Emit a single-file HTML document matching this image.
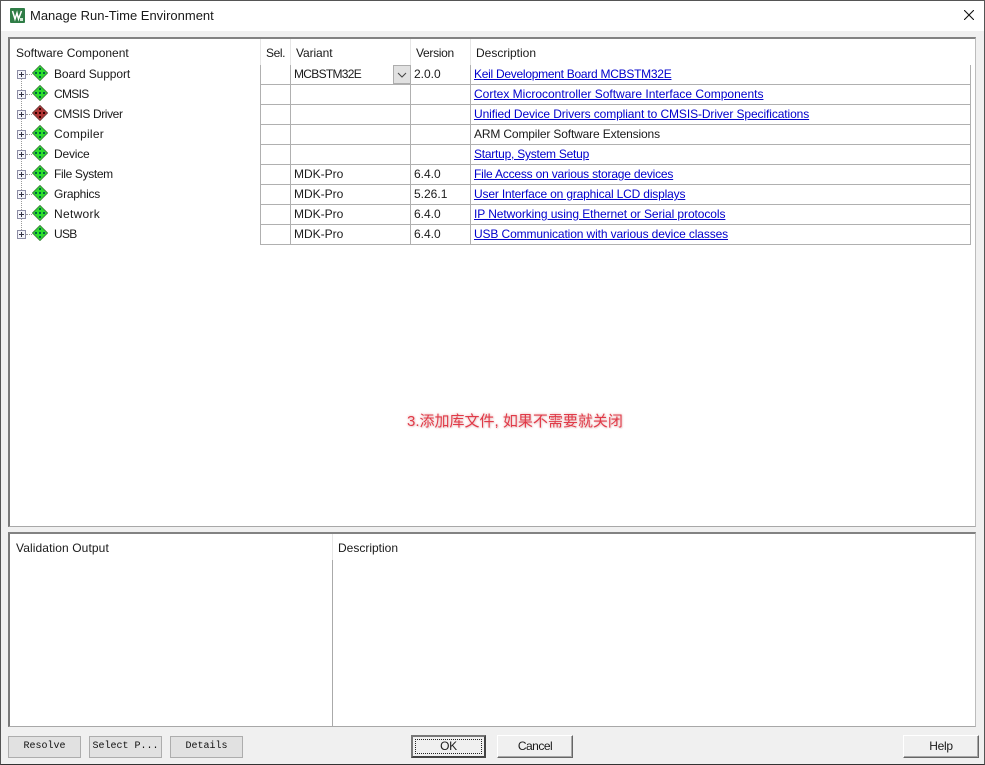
<!DOCTYPE html>
<html><head><meta charset="utf-8"><style>
html,body{margin:0;padding:0}
body{width:985px;height:765px;position:relative;overflow:hidden;background:#f0f0f0;font:12px/20px "Liberation Sans","Noto Sans CJK SC",sans-serif;color:#1a1a1a}
div,a,svg{position:absolute;box-sizing:border-box}
.t{white-space:nowrap}
a.t{color:#0000cc;text-decoration:underline;left:474px}
.h{background:#b0b0b0;height:1px;left:260px;width:711px}
.v{background:#b0b0b0;width:1px;top:65px;height:180px}
.s{background:#e6e6e6;width:1px;top:39px;height:26px}
.d{width:6px;height:1px;left:26px;border-top:1px dotted #999}
.b{font:10px/20px "Liberation Mono",monospace;text-align:center;background:#e1e1e1;border:1px solid #adadad;top:736px;width:73px;height:22px;color:#111}
.r{top:735px;height:23px;text-align:center;background:#f0f0f0;border:1px solid;border-color:#fff #666 #666 #fff;box-shadow:inset -1px -1px 0 #a8a8a8;line-height:21px;font-size:12px}
</style></head><body>
<svg width="0" height="0" style="left:0;top:0"><defs>
<symbol id="g" viewBox="0 0 16 16"><path d="M8 .5L15.500 8 8 15.500.5 8z" fill="#2ce02c" stroke="#3f8a3f"/><path d="M7 3h2v2H7zM7 7h2v2H7zM7 11h2v2H7zM3 7h2v2H3zM11 7h2v2h-2z" fill="#064"/></symbol>
<symbol id="r" viewBox="0 0 16 16"><path d="M8 .5L15.500 8 8 15.500.5 8z" fill="#b03434" stroke="#774040"/><path d="M7 3h2v2H7zM7 7h2v2H7zM7 11h2v2H7zM3 7h2v2H3zM11 7h2v2h-2z" fill="#300"/></symbol>
<symbol id="p" viewBox="0 0 9 9"><path d="M.5.5h8v8h-8z" fill="#f4f4fa" stroke="#8c8ca4"/><path d="M2 4.500h5M4.500 2v5" stroke="#334" fill="none"/></symbol>
</defs></svg>

<!-- window -->
<div style="left:0;top:0;width:985px;height:765px;border:1px solid #555;border-bottom:1px solid #333"></div>
<div style="left:1px;top:1px;width:983px;height:30px;background:#fff"></div>
<svg style="left:10px;top:8px" width="15" height="15" viewBox="0 0 15 15"><rect width="15" height="15" rx="1" fill="#2f7d46"/><path d="M2.500 3l2.500 8 2-6 1.500 6 3-8" stroke="#fff" stroke-width="1.500" fill="none"/><path d="M10 10h3v3h-3z" fill="#cfe8d4"/></svg>
<div class="t" style="left:30px;top:6px;font-size:13px">Manage Run-Time Environment</div>
<svg style="left:964px;top:10px" width="10" height="10" viewBox="0 0 10 10"><path d="M0 0l10 10M10 0L0 10" stroke="#111" stroke-width="1.100" fill="none"/></svg>

<!-- top panel -->
<div style="left:8px;top:37px;width:968px;height:490px;background:#fff;border-style:solid;border-width:2px 1px 1px 2px;border-color:#828282 #bcbcbc #a8a8a8 #7a7a7a"></div>
<div class="s" style="left:260px"></div><div class="s" style="left:290px"></div><div class="s" style="left:410px"></div><div class="s" style="left:470px"></div>
<div class="t" style="left:16px;top:43px">Software Component</div>
<div class="t" style="left:266px;top:43px;letter-spacing:-.4px">Sel.</div>
<div class="t" style="left:296px;top:43px;letter-spacing:-.1px">Variant</div>
<div class="t" style="left:416px;top:43px;letter-spacing:-.3px">Version</div>
<div class="t" style="left:476px;top:43px">Description</div>

<!-- grid -->
<div class="v" style="left:260px"></div><div class="v" style="left:290px"></div><div class="v" style="left:410px"></div><div class="v" style="left:470px"></div><div class="v" style="left:970px"></div>
<div class="h" style="top:84px"></div><div class="h" style="top:104px"></div><div class="h" style="top:124px"></div><div class="h" style="top:144px"></div><div class="h" style="top:164px"></div><div class="h" style="top:184px"></div><div class="h" style="top:204px"></div><div class="h" style="top:224px"></div><div class="h" style="top:244px"></div>

<!-- tree -->
<div style="left:21px;top:70px;height:164px;width:1px;border-left:1px dotted #999"></div>
<div class="d" style="top:74px"></div><div class="d" style="top:94px"></div><div class="d" style="top:114px"></div><div class="d" style="top:134px"></div><div class="d" style="top:154px"></div><div class="d" style="top:174px"></div><div class="d" style="top:194px"></div><div class="d" style="top:214px"></div><div class="d" style="top:234px"></div>
<svg style="left:17px;top:70px" width="9" height="9"><use href="#p"/></svg><svg style="left:17px;top:90px" width="9" height="9"><use href="#p"/></svg><svg style="left:17px;top:110px" width="9" height="9"><use href="#p"/></svg><svg style="left:17px;top:130px" width="9" height="9"><use href="#p"/></svg><svg style="left:17px;top:150px" width="9" height="9"><use href="#p"/></svg><svg style="left:17px;top:170px" width="9" height="9"><use href="#p"/></svg><svg style="left:17px;top:190px" width="9" height="9"><use href="#p"/></svg><svg style="left:17px;top:210px" width="9" height="9"><use href="#p"/></svg><svg style="left:17px;top:230px" width="9" height="9"><use href="#p"/></svg>
<svg style="left:32px;top:65px" width="16" height="16"><use href="#g"/></svg><svg style="left:32px;top:85px" width="16" height="16"><use href="#g"/></svg><svg style="left:32px;top:105px" width="16" height="16"><use href="#r"/></svg><svg style="left:32px;top:125px" width="16" height="16"><use href="#g"/></svg><svg style="left:32px;top:145px" width="16" height="16"><use href="#g"/></svg><svg style="left:32px;top:165px" width="16" height="16"><use href="#g"/></svg><svg style="left:32px;top:185px" width="16" height="16"><use href="#g"/></svg><svg style="left:32px;top:205px" width="16" height="16"><use href="#g"/></svg><svg style="left:32px;top:225px" width="16" height="16"><use href="#g"/></svg>
<div class="t" style="left:54px;top:64px;letter-spacing:-.1px">Board Support</div>
<div class="t" style="left:54px;top:84px;letter-spacing:-.7px">CMSIS</div>
<div class="t" style="left:54px;top:104px;letter-spacing:-.4px">CMSIS Driver</div>
<div class="t" style="left:54px;top:124px;letter-spacing:.25px">Compiler</div>
<div class="t" style="left:54px;top:144px;letter-spacing:-.2px">Device</div>
<div class="t" style="left:54px;top:164px;letter-spacing:-.35px">File System</div>
<div class="t" style="left:54px;top:184px;letter-spacing:-.25px">Graphics</div>
<div class="t" style="left:54px;top:204px;letter-spacing:.3px">Network</div>
<div class="t" style="left:54px;top:224px;letter-spacing:-.7px">USB</div>

<!-- variant / version -->
<div class="t" style="left:294px;top:64px;letter-spacing:-.7px">MCBSTM32E</div>
<div style="left:393px;top:65px;width:18px;height:19px;background:#e1e1e1;border:1px solid #adadad"></div>
<svg style="left:397px;top:72px" width="10" height="6"><path d="M1 1l4 4 4-4" stroke="#444" fill="none"/></svg>
<div class="t" style="left:414px;top:64px">2.0.0</div>
<div class="t" style="left:294px;top:164px">MDK-Pro</div><div class="t" style="left:414px;top:164px">6.4.0</div>
<div class="t" style="left:294px;top:184px">MDK-Pro</div><div class="t" style="left:414px;top:184px">5.26.1</div>
<div class="t" style="left:294px;top:204px">MDK-Pro</div><div class="t" style="left:414px;top:204px">6.4.0</div>
<div class="t" style="left:294px;top:224px">MDK-Pro</div><div class="t" style="left:414px;top:224px">6.4.0</div>

<!-- descriptions -->
<a class="t" style="top:64px;letter-spacing:-.27px">Keil Development Board MCBSTM32E</a>
<a class="t" style="top:84px">Cortex Microcontroller Software Interface Components</a>
<a class="t" style="top:104px;letter-spacing:-.1px">Unified Device Drivers compliant to CMSIS-Driver Specifications</a>
<div class="t" style="left:474px;top:124px;letter-spacing:-.15px">ARM Compiler Software Extensions</div>
<a class="t" style="top:144px;letter-spacing:-.24px">Startup, System Setup</a>
<a class="t" style="top:164px;letter-spacing:-.2px">File Access on various storage devices</a>
<a class="t" style="top:184px;letter-spacing:-.17px">User Interface on graphical LCD displays</a>
<a class="t" style="top:204px;letter-spacing:-.08px">IP Networking using Ethernet or Serial protocols</a>
<a class="t" style="top:224px;letter-spacing:-.12px">USB Communication with various device classes</a>

<!-- annotation -->
<div style="left:407px;top:412px;white-space:nowrap;font-size:15px;line-height:20px;color:#e03a48;text-shadow:0 0 2px #f2c4c4,0 0 3px #f2d0d0,1px 1px 1px #e8e8e8">3.添加库文件, 如果不需要就关闭</div>

<!-- bottom panel -->
<div style="left:8px;top:532px;width:968px;height:195px;background:#fff;border-style:solid;border-width:2px 1px 1px 2px;border-color:#828282 #bcbcbc #a8a8a8 #7a7a7a"></div>
<div style="left:332px;top:534px;width:1px;height:26px;background:#e6e6e6"></div>
<div style="left:332px;top:560px;width:1px;height:166px;background:#aaa"></div>
<div class="t" style="left:16px;top:538px;letter-spacing:.1px">Validation Output</div>
<div class="t" style="left:338px;top:538px">Description</div>

<!-- buttons -->
<div class="b" style="left:8px">Resolve</div>
<div class="b" style="left:89px">Select P...</div>
<div class="b" style="left:170px">Details</div>
<div class="r" style="left:411px;width:75px;border:2px solid #555;border-color:#777 #444 #444 #777;box-shadow:none;line-height:19px;letter-spacing:-.3px">OK<div style="left:2px;top:2px;right:2px;bottom:2px;border:1px dotted #222"></div></div>
<div class="r" style="left:497px;width:76px;letter-spacing:-.5px">Cancel</div>
<div class="r" style="left:903px;width:76px;letter-spacing:-.3px">Help</div>
</body></html>
